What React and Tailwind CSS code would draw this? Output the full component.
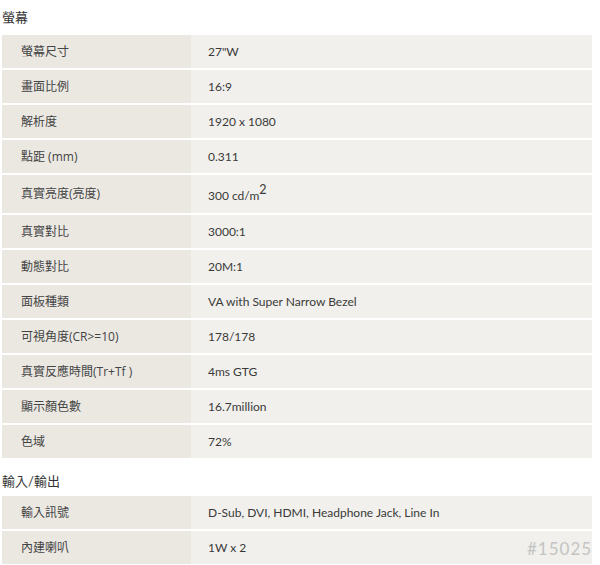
import React from 'react';

const display = [
  { label: '螢幕尺寸', value: '27"W' },
  { label: '畫面比例', value: '16:9' },
  { label: '解析度', value: '1920 x 1080' },
  { label: '點距 (mm)', value: '0.311' },
  { label: '真實亮度(亮度)', value: 'sup', tall: true },
  { label: '真實對比', value: '3000:1' },
  { label: '動態對比', value: '20M:1' },
  { label: '面板種類', value: 'VA with Super Narrow Bezel' },
  { label: '可視角度(CR>=10)', value: '178/178' },
  { label: '真實反應時間(Tr+Tf )', value: '4ms GTG' },
  { label: '顯示顏色數', value: '16.7million' },
  { label: '色域', value: '72%' },
];

const io = [
  { label: '輸入訊號', value: 'D-Sub, DVI, HDMI, Headphone Jack, Line In' },
  { label: '內建喇叭', value: '1W x 2' },
];

function Row({ item }) {
  return (
    <div className={`flex ${item.tall ? 'h-[38px]' : 'h-[33px]'} mb-[2px]`}>
      <div
        className="w-[189px] bg-[#ebe8e2] pl-[19px] flex items-center text-[12px] text-[#444]"
        style={{ fontFamily: '"Open Sans", "Noto Sans CJK TC", sans-serif' }}
      >
        {item.label}
      </div>
      <div className="w-[401px] bg-[#f1f0ec] pl-[17px] flex items-center text-[12px] text-[#3a3a3a]">
        {item.value === 'sup' ? (
          <span className="pt-[5px]">
            300 cd/m<span className="text-[12.5px] relative -top-[6px]">2</span>
          </span>
        ) : (
          item.value
        )}
      </div>
    </div>
  );
}

export default function App() {
  return (
    <div
      className="w-[600px] h-[565px] bg-white overflow-hidden relative pl-[2px]"
      style={{ fontFamily: 'Lato, "Noto Sans CJK TC", sans-serif' }}
    >
      <div className="h-[35px] flex items-center text-[13px] text-[#333]">螢幕</div>
      {display.map((item) => (
        <Row key={item.label} item={item} />
      ))}
      <div className="h-[36px] flex items-end pb-[5px] text-[13px] text-[#333]">輸入/輸出</div>
      {io.map((item) => (
        <Row key={item.label} item={item} />
      ))}
      {/* watermark */}
      <div className="absolute left-[527px] top-[536px] text-[17px] text-[#c4c4c4] tracking-[1px]">
        #15025
      </div>
    </div>
  );
}
